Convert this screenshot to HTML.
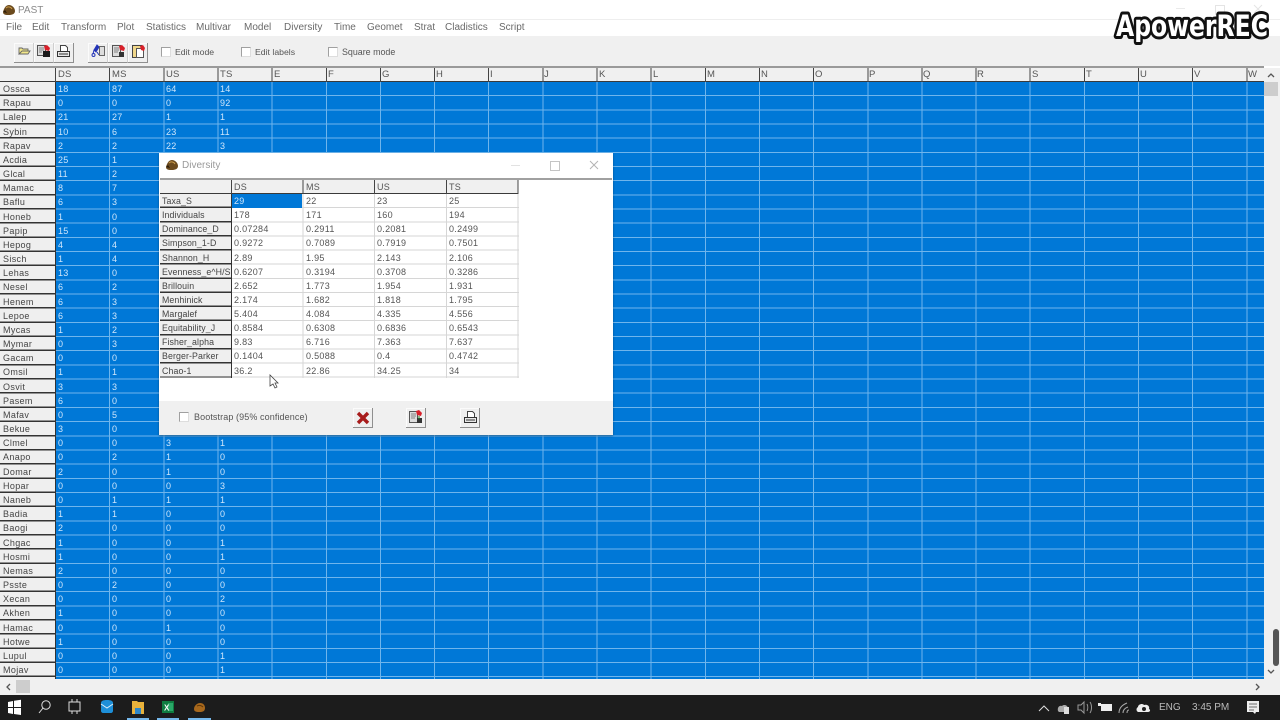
<!DOCTYPE html>
<html><head><meta charset="utf-8"><style>
html,body{margin:0;padding:0}
body{width:1280px;height:720px;overflow:hidden;position:relative;background:#fff;font-family:"Liberation Sans",sans-serif;font-size:9px;color:#4a4a4a}
div,span,svg{position:absolute}
svg{filter:blur(.35px)}
.t{white-space:nowrap;filter:blur(.3px)}
.menu span{top:21px;font-size:10px;line-height:13px;color:#6a6a6a;white-space:nowrap;filter:blur(.3px)}
.ck{width:8px;height:8px;border:1px solid #a0a0a0;border-right-color:#ddd;border-bottom-color:#ddd;background:#fff}
.btn{top:43px;width:19px;height:19px;background:#efefef;border-right:1px solid #cfcfcf;border-bottom:1px solid #8f8f8f;box-shadow:inset 1px 1px 0 #fbfbfb}
.end{border-right-color:#8f8f8f}
.hd span{top:69px;line-height:12px;font-size:9.5px;letter-spacing:.2px;color:#555;filter:blur(.25px)}
.col{top:82px;line-height:14.17px;white-space:nowrap;font-size:9px;letter-spacing:.3px;filter:blur(.25px)}
.w{color:#cfe6fb}
.tb{background:#1c1c1c}
</style></head><body>
<!-- title bar -->
<svg style="left:2px;top:3px" width="14" height="14" viewBox="0 0 14 14"><path d="M1 9C2 5 4 2 7 2c3 0 6 3 6 6 0 3-3 4-6 4C4 12 1 12 1 9z" fill="#6b4a1e"/><path d="M4 5c2-2 5-1 6 1" stroke="#c89a4a" fill="none"/><path d="M1 9l2-2 2 3z" fill="#2c1c08"/></svg>
<span class="t" style="left:18px;top:4px;font-size:10px;line-height:13px;color:#8a8a8a">PAST</span>
<div style="left:0;top:19px;width:1280px;height:1px;background:#eeeeee"></div>
<div style="left:1176px;top:8px;width:9px;height:1px;background:#eaeaea"></div>
<div style="left:1215px;top:5px;width:8px;height:8px;border:1px solid #e4e4e4"></div>
<svg style="left:1253px;top:4px" width="10" height="10"><path d="M1 1l8 8M9 1L1 9" stroke="#e4e4e4"/></svg>
<div class="menu">
<span style="left:6px">File</span><span style="left:32px">Edit</span><span style="left:61px">Transform</span><span style="left:117px">Plot</span><span style="left:146px">Statistics</span><span style="left:196px">Multivar</span><span style="left:244px">Model</span><span style="left:284px">Diversity</span><span style="left:334px">Time</span><span style="left:367px">Geomet</span><span style="left:414px">Strat</span><span style="left:445px">Cladistics</span><span style="left:499px">Script</span>
</div>
<!-- toolbar -->
<div style="left:0;top:36px;width:1280px;height:30px;background:#f0f0f0"></div>
<div class="btn" style="left:14px"></div><div class="btn" style="left:34px"></div><div class="btn end" style="left:54px"></div>
<div class="btn" style="left:88px"></div><div class="btn" style="left:108px"></div><div class="btn end" style="left:128px"></div>
<svg style="left:0;top:40px" width="160" height="24" viewBox="0 40 160 24">
<path d="M19 54v-6h3l1 1h5v2h-6l-3 3h9l2-3h-8" fill="#f3e88a" stroke="#666" stroke-width=".9"/>
<path d="M37.500 45.500h8v10h-8z" fill="#ddd" stroke="#555"/><path d="M39 48h5M39 50h5M39 52h3" stroke="#666" stroke-width=".8"/><path d="M44 46l3-1 3 3-1 3-4-1z" fill="#d8202a"/><path d="M43 51h7v6h-7z" fill="#1a1a1a"/>
<path d="M60.500 45.500h5l2 2v4h-7z" fill="#fff" stroke="#444"/><path d="M57.500 51.500h12v5h-12z" fill="#e8e8e8" stroke="#333"/><path d="M59 54h9" stroke="#333"/>
<path d="M97 45l-3 5 2 2 3-5zM94 50l-1 4M97 52l2 3" fill="#2435b8" stroke="#2435b8"/><circle cx="93.500" cy="55" r="1.500" fill="none" stroke="#2435b8"/><path d="M99.500 46.500h5v9h-5z" fill="#ddd" stroke="#666"/>
<path d="M112.500 45.500h8v11h-8z" fill="#ddd" stroke="#555"/><path d="M114 48h5M114 50h5M114 52h4" stroke="#666" stroke-width=".8"/><path d="M119 46l3-1 3 3-1 3-4-1z" fill="#d8202a"/><path d="M119 52h5v5h-5z" fill="#333"/>
<path d="M132.500 45.500h9v12h-9z" fill="#f0d78a" stroke="#444"/><path d="M136.500 48.500h7v9h-7z" fill="#fff" stroke="#555"/><path d="M140 46l3-1 2 3-1 3-3-1z" fill="#d8202a"/>
</svg>
<div class="ck" style="left:161px;top:47px"></div><span class="t" style="left:175px;top:46px;line-height:12px;font-size:8.7px;color:#555">Edit mode</span>
<div class="ck" style="left:241px;top:47px"></div><span class="t" style="left:255px;top:46px;line-height:12px;font-size:8.7px;color:#555">Edit labels</span>
<div class="ck" style="left:328px;top:47px"></div><span class="t" style="left:342px;top:46px;line-height:12px;font-size:8.9px;color:#555">Square mode</span>
<!-- grid -->
<div style="left:0;top:66px;width:1264px;height:2px;background:#9a9a9a"></div>
<div style="left:0;top:68px;width:1264px;height:13px;background:#f0f0f0;border-bottom:1px solid #3a3a3a"></div>
<div style="left:55px;top:68px;width:1209px;height:14px;background:repeating-linear-gradient(90deg,#444 0,#444 1px,transparent 1px,transparent 54.15px)"></div>
<div style="left:55px;top:82px;width:1209px;height:597px;background-color:#0078d7;background-image:repeating-linear-gradient(90deg,#6fb5ec 0,#6fb5ec 1px,transparent 1px,transparent 54.15px),repeating-linear-gradient(180deg,transparent 0,transparent 13.17px,#6fb5ec 13.17px,#6fb5ec 14.17px)"></div>
<div style="left:0;top:82px;width:55px;height:597px;background:repeating-linear-gradient(180deg,#efefef 0,#efefef 12.67px,#333 12.67px,#333 14.17px);border-right:1px solid #333"></div>
<div class="hd">
<span style="left:58px">DS</span><span style="left:112px">MS</span><span style="left:166px">US</span><span style="left:220px">TS</span><span style="left:274px">E</span><span style="left:328px">F</span><span style="left:382px">G</span><span style="left:436px">H</span><span style="left:490px">I</span><span style="left:544px">J</span><span style="left:599px">K</span><span style="left:653px">L</span><span style="left:707px">M</span><span style="left:761px">N</span><span style="left:815px">O</span><span style="left:869px">P</span><span style="left:923px">Q</span><span style="left:977px">R</span><span style="left:1032px">S</span><span style="left:1086px">T</span><span style="left:1140px">U</span><span style="left:1194px">V</span><span style="left:1248px">W</span>
</div>
<div class="col" style="left:3px;letter-spacing:.35px;color:#444">Ossca<br>Rapau<br>Lalep<br>Sybin<br>Rapav<br>Acdia<br>Glcal<br>Mamac<br>Baflu<br>Honeb<br>Papip<br>Hepog<br>Sisch<br>Lehas<br>Nesel<br>Henem<br>Lepoe<br>Mycas<br>Mymar<br>Gacam<br>Omsil<br>Osvit<br>Pasem<br>Mafav<br>Bekue<br>Clmel<br>Anapo<br>Domar<br>Hopar<br>Naneb<br>Badia<br>Baogi<br>Chgac<br>Hosmi<br>Nemas<br>Psste<br>Xecan<br>Akhen<br>Hamac<br>Hotwe<br>Lupul<br>Mojav</div>
<div class="col w" style="left:58px">18<br>0<br>21<br>10<br>2<br>25<br>11<br>8<br>6<br>1<br>15<br>4<br>1<br>13<br>6<br>6<br>6<br>1<br>0<br>0<br>1<br>3<br>6<br>0<br>3<br>0<br>0<br>2<br>0<br>0<br>1<br>2<br>1<br>1<br>2<br>0<br>0<br>1<br>0<br>1<br>0<br>0</div>
<div class="col w" style="left:112px">87<br>0<br>27<br>6<br>2<br>1<br>2<br>7<br>3<br>0<br>0<br>4<br>4<br>0<br>2<br>3<br>3<br>2<br>3<br>0<br>1<br>3<br>0<br>5<br>0<br>0<br>2<br>0<br>0<br>1<br>1<br>0<br>0<br>0<br>0<br>2<br>0<br>0<br>0<br>0<br>0<br>0</div>
<div class="col w" style="left:166px">64<br>0<br>1<br>23<br>22<br><br><br><br><br><br><br><br><br><br><br><br><br><br><br><br><br><br><br><br><br>3<br>1<br>1<br>0<br>1<br>0<br>0<br>0<br>0<br>0<br>0<br>0<br>0<br>1<br>0<br>0<br>0</div>
<div class="col w" style="left:220px">14<br>92<br>1<br>11<br>3<br><br><br><br><br><br><br><br><br><br><br><br><br><br><br><br><br><br><br><br><br>1<br>0<br>0<br>3<br>1<br>0<br>0<br>1<br>1<br>0<br>0<br>2<br>0<br>0<br>0<br>1<br>1</div>
<!-- scrollbars -->
<div style="left:1264px;top:68px;width:16px;height:627px;background:#f0f0f0"></div>
<div style="left:0;top:679px;width:1280px;height:16px;background:#f0f0f0"></div>
<div style="left:1264px;top:82px;width:14px;height:14px;background:#cdcdcd"></div>
<div style="left:16px;top:680px;width:14px;height:13px;background:#cdcdcd"></div>
<div style="left:1273px;top:629px;width:6px;height:37px;background:#555;border-radius:3px"></div>
<svg style="left:0;top:68px" width="1280" height="627" viewBox="0 68 1280 627" fill="none" stroke="#555" stroke-width="1.3"><path d="M1268 77l3-3 3 3M1268 670l3 3 3-3M10 684l-3 3 3 3M1256 684l3 3-3 3"/></svg>
<!-- dialog -->
<div style="left:159px;top:153px;width:454px;height:282px;background:#fff;box-shadow:0 1px 2px rgba(0,0,0,.35)"></div>
<svg style="left:165px;top:158px" width="14" height="14" viewBox="0 0 14 14"><path d="M1 9C2 5 4 2 7 2c3 0 6 3 6 6 0 3-3 4-6 4C4 12 1 12 1 9z" fill="#6b4a1e"/><path d="M4 5c2-2 5-1 6 1" stroke="#c89a4a" fill="none"/><path d="M1 9l2-2 2 3z" fill="#2c1c08"/></svg>
<span class="t" style="left:182px;top:159px;font-size:10px;line-height:13px;color:#999">Diversity</span>
<div style="left:511px;top:165px;width:9px;height:1px;background:#e2e2e2"></div>
<div style="left:550px;top:161px;width:8px;height:8px;border:1px solid #c4c4c4"></div>
<svg style="left:589px;top:160px" width="10" height="10"><path d="M1 1l8 8M9 1L1 9" stroke="#b4b4b4"/></svg>
<div style="left:160px;top:178px;width:452px;height:2px;background:#a0a0a0"></div>
<div style="left:160px;top:180px;width:358px;height:13px;background:#f0f0f0;border-bottom:1px solid #3a3a3a"></div>
<div style="left:160px;top:194px;width:71px;height:184px;background:repeating-linear-gradient(180deg,#efefef 0,#efefef 12.7px,#333 12.7px,#333 14.13px);border-right:1px solid #333"></div>
<div style="left:232px;top:194px;width:287px;height:184px;background-image:repeating-linear-gradient(90deg,transparent 0,transparent 70.6px,#d6d6d6 70.6px,#d6d6d6 71.6px),repeating-linear-gradient(180deg,transparent 0,transparent 13.13px,#d6d6d6 13.13px,#d6d6d6 14.13px)"></div>
<div style="left:231px;top:180px;width:288px;height:14px;background:repeating-linear-gradient(90deg,#444 0,#444 1px,transparent 1px,transparent 71.6px)"></div>
<div style="left:232px;top:194px;width:70px;height:14px;background:#0078d7"></div>
<span class="t" style="left:234px;top:181px;line-height:12px;color:#555;letter-spacing:.2px">DS</span>
<span class="t" style="left:306px;top:181px;line-height:12px;color:#555;letter-spacing:.2px">MS</span>
<span class="t" style="left:377px;top:181px;line-height:12px;color:#555;letter-spacing:.2px">US</span>
<span class="t" style="left:449px;top:181px;line-height:12px;color:#555;letter-spacing:.2px">TS</span>
<div class="col" style="left:162px;top:194px;line-height:14.13px;letter-spacing:.1px;font-size:8.8px;color:#444">Taxa_S<br>Individuals<br>Dominance_D<br>Simpson_1-D<br>Shannon_H<br>Evenness_e^H/S<br>Brillouin<br>Menhinick<br>Margalef<br>Equitability_J<br>Fisher_alpha<br>Berger-Parker<br>Chao-1</div>
<div class="col" style="left:234px;top:194px;line-height:14.13px;color:#555"><span class="w" style="position:static">29</span><br>178<br>0.07284<br>0.9272<br>2.89<br>0.6207<br>2.652<br>2.174<br>5.404<br>0.8584<br>9.83<br>0.1404<br>36.2</div>
<div class="col" style="left:306px;top:194px;line-height:14.13px;color:#555">22<br>171<br>0.2911<br>0.7089<br>1.95<br>0.3194<br>1.773<br>1.682<br>4.084<br>0.6308<br>6.716<br>0.5088<br>22.86</div>
<div class="col" style="left:377px;top:194px;line-height:14.13px;color:#555">23<br>160<br>0.2081<br>0.7919<br>2.143<br>0.3708<br>1.954<br>1.818<br>4.335<br>0.6836<br>7.363<br>0.4<br>34.25</div>
<div class="col" style="left:449px;top:194px;line-height:14.13px;color:#555">25<br>194<br>0.2499<br>0.7501<br>2.106<br>0.3286<br>1.931<br>1.795<br>4.556<br>0.6543<br>7.637<br>0.4742<br>34</div>
<!-- cursor -->
<svg style="left:269px;top:374px" width="11" height="15" viewBox="0 0 11 15"><path d="M1 1v11l3-2 2 4 2-1-2-4h3z" fill="#fff" stroke="#444" stroke-width=".8"/></svg>
<!-- dialog footer -->
<div style="left:159px;top:401px;width:454px;height:34px;background:#f0f0f0"></div>
<div class="ck" style="left:179px;top:412px"></div>
<span class="t" style="left:194px;top:411px;line-height:12px;color:#555;letter-spacing:.1px">Bootstrap (95% confidence)</span>
<div class="btn end" style="left:353px;top:408px"></div><div class="btn end" style="left:406px;top:408px"></div><div class="btn end" style="left:460px;top:408px"></div>
<svg style="left:350px;top:404px" width="135" height="28" viewBox="350 404 135 28">
<path d="M358 413l10 10M368 413l-10 10" stroke="#a81c1c" stroke-width="3.400"/>
<path d="M409.500 411.500h8v11h-8z" fill="#ddd" stroke="#555"/><path d="M411 414h5M411 416h5M411 418h4" stroke="#666" stroke-width=".8"/><path d="M416 411l3-1 3 3-1 3-4-1z" fill="#d8202a"/><path d="M417 418h5v5h-5z" fill="#333"/><path d="M419 416v3" stroke="#2a8a2a"/>
<path d="M467.500 411.500h5l2 2v4h-7z" fill="#fff" stroke="#444"/><path d="M464.500 417.500h12v5h-12z" fill="#e8e8e8" stroke="#333"/><path d="M466 420h9" stroke="#333"/>
</svg>
<!-- logo -->
<svg style="left:1110px;top:6px;filter:none" width="165" height="42" viewBox="0 0 165 42"><text x="6" y="30" textLength="152" lengthAdjust="spacingAndGlyphs" font-family="DejaVu Sans" font-weight="bold" font-size="29" fill="#fff" stroke="#111" stroke-width="6" stroke-linejoin="round" paint-order="stroke">ApowerREC</text></svg>
<!-- taskbar -->
<div class="tb" style="left:0;top:695px;width:1280px;height:25px"></div>
<svg style="left:0;top:695px" width="260" height="25" viewBox="0 0 260 25">
<path d="M8 7l5-1v6H8zM14 5.800l7-1V12h-7zM8 13h5v6l-5-1zM14 13h7v7l-7-1z" fill="#fff"/>
<circle cx="46" cy="10" r="4.200" fill="none" stroke="#ddd"/><path d="M43 13l-4 5" stroke="#ddd"/>
<path d="M69 7h11v9H69zM72 4v3M77 4v3M72 16v3M77 16v3" fill="none" stroke="#ddd"/>
<path d="M101 8c0-2 2-3 6-3s6 1 6 3v8c0 1-1 2-2 2h-8c-1 0-2-1-2-2z" fill="#1d8fd8"/><path d="M101 9l6 4 6-4" stroke="#d8eefb" fill="none"/>
<path d="M132 6h5l1 1h6v12h-12z" fill="#e8b23c"/><path d="M135 13h6v6h-6z" fill="#2e87c8"/>
<path d="M162 6h12v12h-12z" fill="#107c41"/><path d="M168 8h5v8h-5z" fill="#2aa868"/><text x="164" y="15.500" font-size="8" font-weight="bold" fill="#fff" font-family="Liberation Sans">X</text>
<path d="M194 14c0-3 3-6 6-6s5 2 5 5-2 4-5 4-6 0-6-3z" fill="#a8681c"/><path d="M197 11c2-1 4-1 6 1" stroke="#603808" fill="none"/>
</svg>
<div style="left:127px;top:718px;width:22px;height:2px;background:#76b9ed"></div>
<div style="left:157px;top:718px;width:22px;height:2px;background:#76b9ed"></div>
<div style="left:188px;top:718px;width:23px;height:2px;background:#76b9ed"></div>
<svg style="left:1020px;top:695px" width="260" height="25" viewBox="0 0 260 25" fill="none" stroke="#ddd">
<path d="M19 16l5-5 5 5"/>
<path d="M38 16c-1-4 2-6 4-5 2-2 6-1 6 3 1 2 0 3-2 3h-7z" fill="#aaa" stroke="none"/><rect x="44" y="12" width="5" height="7" fill="#ddd" stroke="none"/>
<path d="M58 10h3l3-3v11l-3-3h-3zM67 9c1 2 1 5 0 7M70 7c2 3 2 8 0 11" stroke="#999"/>
<path d="M81 9h11v7H81z" fill="#eee" stroke="none"/><path d="M78 8h3v3h-3z" fill="#eee" stroke="none"/>
<path d="M99 18c0-5 3-8 8-10M103 18c0-3 2-5 5-6M107 18c0-2 1-3 2-3" stroke="#aaa"/>
<path d="M118 17c-2-1-2-4 0-5 0-3 5-4 6-2 3-1 6 1 5 4 2 1 1 3-1 3z" fill="#eee" stroke="none"/><circle cx="124" cy="14" r="2" fill="#222" stroke="none"/>
<path d="M227 6h12v11h-3l-1 2-2-2h-6z" fill="#eee" stroke="none"/><path d="M229 9h8M229 12h8M229 15h5" stroke="#444" stroke-width=".8"/>
</svg>
<span class="t" style="left:1159px;top:701px;font-size:10px;line-height:13px;color:#bbb">ENG</span>
<span class="t" style="left:1192px;top:701px;font-size:10px;line-height:13px;color:#bbb">3:45 PM</span>
</body></html>
